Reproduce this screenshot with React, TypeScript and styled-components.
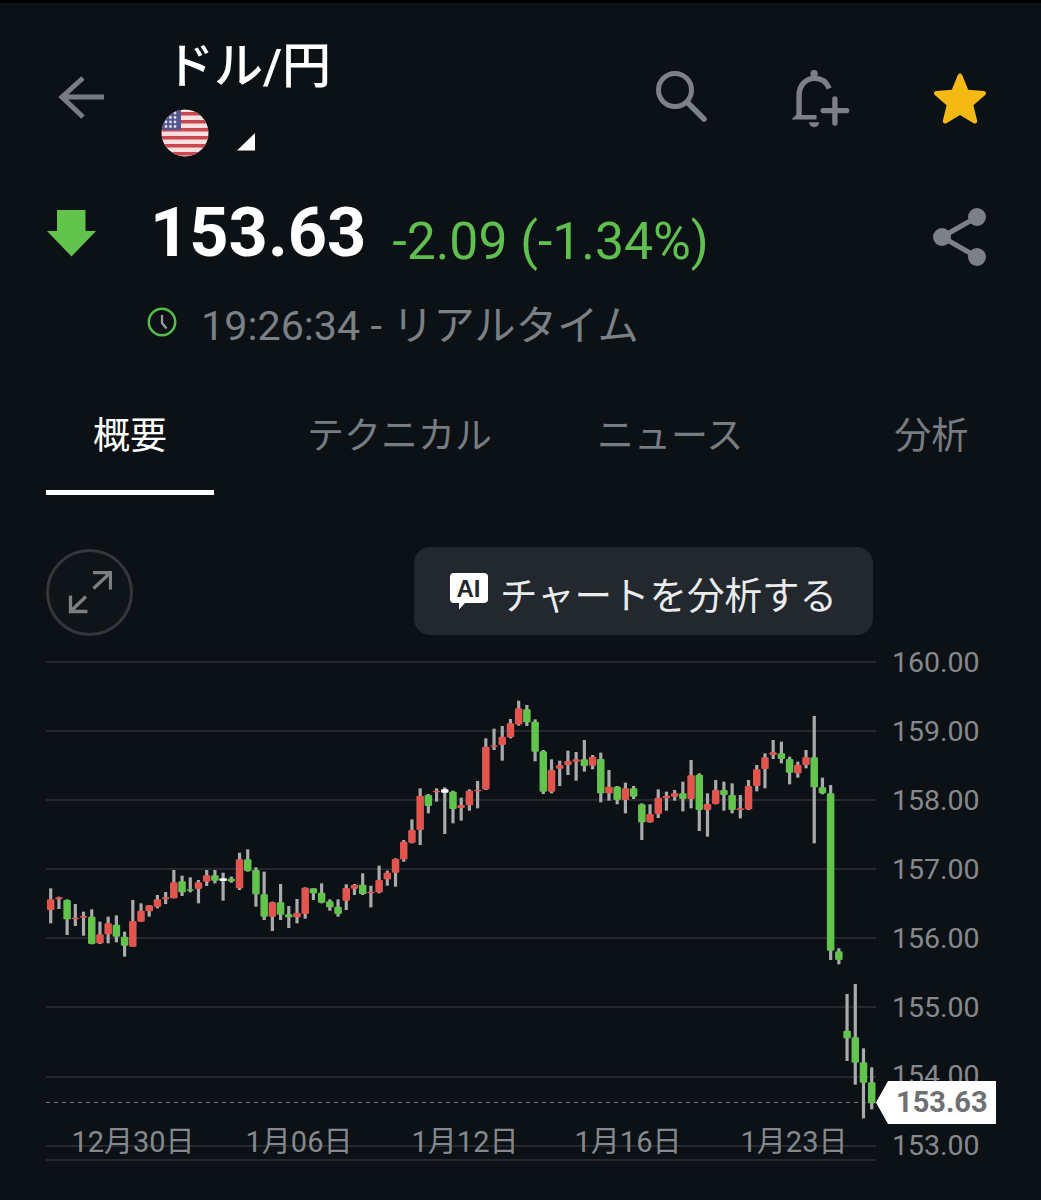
import styled, { createGlobalStyle } from "styled-components";

type Tone = "r" | "g" | "w";
type Row = [number, number, number, number, Tone];

// values are in third-of-a-pixel units, one list per stretch of the chart
const stretchA: Row[] = [
  [145, 178, 210, 250, "r"], [170, 172, 178, 207, "r"], [178, 180, 238, 285, "g"], [192, 233, 238, 258, "r"],
  [215, 228, 233, 287, "r"], [208, 230, 312, 313, "g"], [245, 283, 310, 312, "r"], [230, 250, 283, 310, "r"],
  [226, 254, 290, 307, "g"], [275, 290, 317, 350, "g"], [180, 243, 320, 320, "r"], [190, 212, 245, 245, "r"],
  [195, 196, 214, 230, "r"], [165, 178, 200, 205, "r"], [156, 172, 178, 192, "r"], [90, 127, 175, 175, "r"],
  [107, 124, 157, 168, "g"], [112, 148, 152, 157, "g"], [120, 127, 147, 190, "r"], [90, 106, 125, 138, "r"],
  [90, 106, 122, 130, "g"], [98, 115, 123, 182, "w"], [110, 116, 124, 128, "g"], [38, 58, 145, 150, "r"],
  [28, 58, 93, 95, "g"], [82, 90, 163, 200, "g"], [95, 163, 230, 240, "g"], [185, 187, 230, 273, "r"],
  [132, 187, 224, 240, "g"], [198, 223, 232, 264, "g"], [177, 219, 232, 250, "r"], [142, 143, 222, 236, "r"],
];
const stretchB: Row[] = [
  [595, 595, 610, 630, "g"], [580, 608, 638, 640, "g"], [628, 634, 652, 662, "g"], [628, 650, 672, 680, "g"],
  [583, 594, 632, 660, "r"], [582, 585, 596, 615, "r"], [550, 584, 612, 615, "g"], [587, 605, 609, 652, "r"],
  [527, 570, 607, 610, "r"], [542, 548, 568, 587, "r"], [505, 507, 548, 590, "r"], [450, 455, 508, 515, "r"],
  [388, 420, 458, 460, "r"], [295, 317, 420, 465, "r"], [312, 315, 348, 370, "g"], [295, 302, 307, 335, "r"],
  [292, 298, 308, 432, "w"], [302, 305, 357, 400, "g"], [323, 345, 354, 392, "r"], [298, 302, 346, 362, "r"],
  [273, 299, 303, 355, "r"], [145, 170, 298, 300, "r"], [116, 166, 170, 180, "r"], [108, 140, 165, 212, "r"],
  [87, 100, 142, 145, "r"], [32, 55, 103, 107, "r"], [45, 58, 97, 108, "g"], [88, 95, 185, 214, "g"],
  [180, 184, 305, 312, "g"], [208, 240, 305, 310, "r"], [212, 225, 236, 288, "r"], [182, 213, 225, 255, "r"],
  [186, 208, 215, 272, "r"],
];
const stretchC: Row[] = [
  [120, 178, 198, 215, "g"], [165, 170, 197, 208, "r"], [158, 177, 280, 307, "g"], [210, 260, 280, 302, "r"],
  [258, 260, 300, 313, "g"], [248, 265, 300, 340, "r"], [258, 265, 290, 297, "g"], [310, 313, 367, 420, "g"],
  [313, 342, 367, 368, "r"], [268, 293, 342, 354, "r"], [275, 287, 295, 332, "r"], [270, 280, 290, 302, "r"],
  [245, 280, 297, 334, "g"], [180, 226, 297, 325, "r"], [220, 224, 330, 393, "g"], [280, 312, 330, 410, "r"],
  [240, 270, 312, 313, "r"], [245, 270, 285, 332, "g"], [250, 285, 330, 340, "g"], [285, 325, 330, 355, "r"],
  [240, 258, 328, 330, "r"], [195, 208, 258, 274, "r"], [160, 172, 207, 265, "r"], [120, 157, 165, 177, "r"],
  [125, 160, 177, 190, "g"], [170, 177, 218, 253, "g"], [185, 194, 220, 233, "r"], [150, 172, 195, 205, "r"],
  [48, 172, 262, 430, "g"], [233, 262, 280, 283, "g"], [255, 280, 752, 780, "g"],
];
const stretchD: Row[] = [
  [55, 64, 90, 103, "g"], [192, 302, 325, 393, "g"], [162, 322, 398, 464, "g"], [355, 397, 458, 565, "g"],
  [412, 457, 520, 538, "g"],
];

const toPixels = (rows: Row[], base: number) =>
  rows.map(([high, top, bottom, low, tone]) => ({
    high: base + high / 3,
    top: base + top / 3,
    bottom: base + bottom / 3,
    low: base + low / 3,
    tone,
  }));

const candles = [
  ...toPixels(stretchA, 840),
  ...toPixels(stretchB, 690),
  ...toPixels(stretchC, 700),
  ...toPixels(stretchD, 930),
];

const toneColor: Record<Tone, string> = { r: "#e2554f", g: "#62c44d", w: "#ffffff" };

const gridLines = [662, 731, 800, 869, 938, 1007, 1077, 1146, 1160];
const priceLabels = [
  { y: 662, text: "160.00" }, { y: 731, text: "159.00" }, { y: 800, text: "158.00" }, { y: 869, text: "157.00" },
  { y: 938, text: "156.00" }, { y: 1007, text: "155.00" }, { y: 1075, text: "154.00" }, { y: 1145, text: "153.00" },
];
const dateLabels = [
  { x: 133, text: "12月30日" }, { x: 299, text: "1月06日" }, { x: 465, text: "1月12日" },
  { x: 628, text: "1月16日" }, { x: 794, text: "1月23日" },
];
const tabs = [
  { label: "概要", gap: 0, active: true },
  { label: "テクニカル", gap: 46, active: false },
  { label: "ニュース", gap: 11, active: false },
  { label: "分析", gap: 57, active: false },
];

const App = () => {
  return (
    <Page>
      <GlobalStyle />
      <TopBar>
        <BackIcon viewBox="0 0 50 50">
          <path d="M47 23H6M26 4L5 23l21 20" />
        </BackIcon>
        <TitleBlock>
          <Title>ドル/円</Title>
          <MarketRow>
            <Flag />
            <Corner viewBox="0 0 18 18"><path d="M0 17.5H18V0z" /></Corner>
          </MarketRow>
        </TitleBlock>
        <Actions>
          <ActionIcon $w={54} $h={54} viewBox="0 0 54 54">
            <circle cx="21" cy="21" r="16.5" fill="none" stroke="#7c8087" strokeWidth="5" />
            <path d="M33 33l17 17" stroke="#7c8087" strokeWidth="5.5" strokeLinecap="round" fill="none" />
          </ActionIcon>
          <ActionIcon $w={62} $h={62} viewBox="510 80 185 185">
            <circle cx="585" cy="97" r="11" fill="#7c8087" />
            <path d="M540 222V163c0-32 20-52 46-52 20 0 36 10 44 30" fill="none" stroke="#7c8087" strokeWidth="16" />
            <path d="M517 234l14-14h61v14z" fill="#7c8087" />
            <path d="M570 242h30a15 15 0 0 1-30 0z" fill="#7c8087" />
            <path d="M612 207h70M647 172v72" fill="none" stroke="#7c8087" strokeWidth="16" strokeLinecap="round" />
          </ActionIcon>
          <ActionIcon $w={54} $h={52} viewBox="0 0 54 52">
            <path
              d="M27 1.5c1 0 1.8.7 2.2 1.6l6 14.6 15.6 1.2c2.2.2 3 2.9 1.4 4.2L40.400 33.300l3.700 15.300c.5 2.100-1.700 3.700-3.500 2.600L27 43l-13.600 8.200c-1.800 1.100-4-.5-3.500-2.600l3.700-15.300L1.800 23.100c-1.600-1.300-.8-4 1.400-4.200l15.600-1.200 6-14.600C25.200 2.200 26 1.500 27 1.500z"
              fill="#f5b914"
            />
          </ActionIcon>
        </Actions>
      </TopBar>

      <QuoteRow>
        <DownArrow viewBox="0 0 49 47">
          <path d="M10 0H38.500V21H49L24.500 46.500 0 21H10z" />
        </DownArrow>
        <Price>153.63</Price>
        <Change>-2.09 (-1.34%)</Change>
        <ShareIcon viewBox="0 0 54 60">
          <path d="M44 10L9 30l35 20" fill="none" stroke="#7c8087" strokeWidth="5" />
          <circle cx="44" cy="10" r="9" fill="#7c8087" />
          <circle cx="9" cy="30" r="9" fill="#7c8087" />
          <circle cx="44" cy="50" r="9" fill="#7c8087" />
        </ShareIcon>
      </QuoteRow>

      <TimeRow>
        <ClockIcon viewBox="0 0 30 30">
          <circle cx="15" cy="15" r="13.200" fill="none" stroke="#57bd4a" strokeWidth="2.500" />
          <path d="M15 8v8l4.500 5.500" fill="none" stroke="#9a9ea3" strokeWidth="2.200" />
        </ClockIcon>
        <TimeText>19:26:34 - リアルタイム</TimeText>
      </TimeRow>

      <TabRow>
        {tabs.map((tab) => (
          <Tab key={tab.label} $active={tab.active} $gap={tab.gap}>{tab.label}</Tab>
        ))}
      </TabRow>

      <Toolbar>
        <ExpandButton>
          <svg width="44" height="44" viewBox="0 0 44 44" fill="none" stroke="#7d7f82" strokeWidth="3.300">
            <path d="M25 1.500H42.500V18.500M42.500 1.500L25.500 17.500" />
            <path d="M2.500 24.500V40.500H19.500M2.500 40.500L18 25.500" />
          </svg>
        </ExpandButton>
        <AnalyzeButton>
          <svg width="38" height="37" viewBox="0 0 38 37">
            <path d="M4 0H34a4 4 0 0 1 4 4V26a4 4 0 0 1-4 4H15L9 36.500V30H4a4 4 0 0 1-4-4V4a4 4 0 0 1 4-4z" fill="#fff" />
            <AiMark x="18.500" y="24" textAnchor="middle">AI</AiMark>
          </svg>
          <AnalyzeLabel>チャートを分析する</AnalyzeLabel>
        </AnalyzeButton>
      </Toolbar>

      <ChartArea>
        <ChartSvg viewBox="0 640 1041 560">
          {gridLines.map((y) => (
            <line key={y} x1="46" x2="876" y1={y} y2={y} stroke="#2e3236" strokeWidth="1.500" />
          ))}
          <line x1="46" x2="866" y1="1102.500" y2="1102.500" stroke="#73777b" strokeWidth="1.200" strokeDasharray="4 4" />
          {priceLabels.map((item) => (
            <PriceText key={item.text} x="892" y={item.y} dominantBaseline="central">{item.text}</PriceText>
          ))}
          {dateLabels.map((item) => (
            <DateText key={item.text} x={item.x} y="1142" textAnchor="middle" dominantBaseline="central">{item.text}</DateText>
          ))}
          {candles.map((candle, i) => {
            const x = 50.700 + i * 8.210;
            return (
              <g key={i}>
                <line x1={x} x2={x} y1={candle.high} y2={candle.low} stroke="#a8aaad" strokeWidth="3.200" />
                <rect
                  x={x - 3.750}
                  y={candle.top}
                  width="7.500"
                  height={Math.max(candle.bottom - candle.top, 1.500)}
                  rx="1.200"
                  fill={toneColor[candle.tone]}
                />
              </g>
            );
          })}
        </ChartSvg>
        <LastPrice>153.63</LastPrice>
      </ChartArea>
    </Page>
  );
};

const Flag = () => (
  <FlagSvg viewBox="0 0 48 48">
    <defs>
      <clipPath id="flag-round"><circle cx="24" cy="24" r="23.500" /></clipPath>
    </defs>
    <g clipPath="url(#flag-round)">
      <rect width="48" height="48" fill="#f6dfe0" />
      {[3, 11, 19, 27, 35, 43].map((y) => (
        <rect key={y} y={y} width="48" height="3.500" fill="#c9474f" />
      ))}
      <rect width="20" height="21" fill="#54558f" />
      {[4, 8.500, 13, 17.500].map((y) =>
        [5, 9.500, 14].map((x) => <circle key={`${x}-${y}`} cx={x} cy={y} r="1.400" fill="#dcdcec" />)
      )}
    </g>
  </FlagSvg>
);

const GlobalStyle = createGlobalStyle`
  html, body {
    margin: 0;
    padding: 0;
    background: #0c1116;
  }
`;

const Page = styled.div`
  width: 1041px;
  height: 1200px;
  box-sizing: border-box;
  border-top: 3px solid #000;
  background: #0c1116;
  overflow: hidden;
  font-family: Roboto, "Noto Sans CJK JP", sans-serif;
`;

const TopBar = styled.div`
  height: 160px;
  padding: 0 54px 0 57px;
  display: flex;
  align-items: flex-start;
`;
const BackIcon = styled.svg`
  width: 50px;
  height: 50px;
  margin-top: 71px;
  fill: none;
  stroke: #777c83;
  stroke-width: 5;
`;
const TitleBlock = styled.div`
  margin-left: 54px;
  display: flex;
  flex-direction: column;
`;
const Title = styled.div`
  margin: 34px 0 0 4px;
  height: 60px;
  font-size: 49px;
  font-weight: 500;
  line-height: 60px;
  color: #fff;
`;
const MarketRow = styled.div`
  display: flex;
  align-items: flex-start;
  margin-top: 12px;
`;
const FlagSvg = styled.svg`
  width: 48px;
  height: 48px;
`;
const Corner = styled.svg`
  width: 18px;
  height: 18px;
  margin: 24px 0 0 28px;
  fill: #fff;
`;
const Actions = styled.div`
  margin-left: auto;
  display: flex;
  align-items: flex-start;
`;
const ActionIcon = styled.svg<{ $w: number; $h: number }>`
  width: ${(p) => p.$w}px;
  height: ${(p) => p.$h}px;
  margin: 65px 0 0 81px;
  &:first-child { margin-top: 66px; }
  &:last-child { margin: 69px 0 0 82px; }
`;

const QuoteRow = styled.div`
  height: 127px;
  padding: 0 54px 0 47px;
  display: flex;
  align-items: flex-start;
`;
const DownArrow = styled.svg`
  width: 49px;
  height: 47px;
  margin-top: 47px;
  fill: #62c44d;
`;
const Price = styled.div`
  margin: 27px 0 0 54px;
  font-size: 68.500px;
  line-height: 86px;
  font-weight: 700;
  color: #fff;
`;
const Change = styled.div`
  margin: 47px 0 0 26px;
  font-size: 51.700px;
  line-height: 64px;
  color: #5fbf4f;
`;
const ShareIcon = styled.svg`
  width: 54px;
  height: 60px;
  margin: 44px 0 0 auto;
`;

const TimeRow = styled.div`
  height: 105px;
  padding-left: 147px;
  display: flex;
  align-items: flex-start;
`;
const ClockIcon = styled.svg`
  width: 30px;
  height: 30px;
  margin-top: 17px;
`;
const TimeText = styled.div`
  margin: 8px 0 0 24px;
  font-size: 41.300px;
  line-height: 56px;
  color: #7b8085;
`;

const TabRow = styled.div`
  height: 100px;
  padding-left: 46px;
  display: flex;
`;
const Tab = styled.div<{ $active: boolean; $gap: number }>`
  box-sizing: border-box;
  height: 100px;
  padding: 15px 47px 0;
  margin-left: ${(p) => p.$gap}px;
  border-bottom: 5px solid ${(p) => (p.$active ? "#fff" : "transparent")};
  font-size: 37px;
  line-height: 54px;
  color: ${(p) => (p.$active ? "#fff" : "#777c81")};
`;

const Toolbar = styled.div`
  margin-top: 52px;
  height: 88px;
  padding-left: 46px;
  display: flex;
  align-items: center;
`;
const ExpandButton = styled.div`
  box-sizing: border-box;
  width: 87px;
  height: 87px;
  margin-top: 3px;
  border: 3px solid #33373b;
  border-radius: 50%;
  background: #0f1418;
  display: flex;
  align-items: center;
  justify-content: center;
`;
const AnalyzeButton = styled.div`
  box-sizing: border-box;
  width: 459px;
  height: 88px;
  margin-left: 281px;
  padding-left: 36px;
  border-radius: 16px;
  background: #22282e;
  display: flex;
  align-items: center;
  gap: 12px;
`;
const AiMark = styled.text`
  font-family: "Liberation Sans", sans-serif;
  font-size: 24px;
  font-weight: 700;
  fill: #22282e;
`;
const AnalyzeLabel = styled.span`
  padding-top: 10px;
  font-size: 37.500px;
  line-height: 50px;
  color: #e9ebec;
`;

const ChartArea = styled.div`
  position: relative;
  height: 560px;
  margin-top: 5px;
`;
const ChartSvg = styled.svg`
  display: block;
  width: 1041px;
  height: 560px;
`;
const PriceText = styled.text`
  font-family: Roboto, "Noto Sans CJK JP", sans-serif;
  font-size: 28.500px;
  fill: #85898d;
`;
const DateText = styled(PriceText)`
  font-size: 29px;
`;
const LastPrice = styled.div`
  position: absolute;
  left: 876px;
  top: 441px;
  box-sizing: border-box;
  width: 120px;
  height: 43px;
  padding-left: 20px;
  background: #fff;
  clip-path: polygon(0 50%, 12px 0, 100% 0, 100% 100%, 12px 100%);
  font-size: 29px;
  font-weight: 700;
  line-height: 43px;
  color: #6f7072;
`;

export default App;
